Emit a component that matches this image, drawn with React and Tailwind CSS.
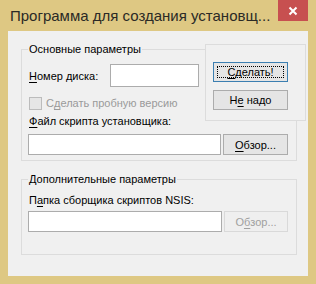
import React from 'react';

const u = 'underline underline-offset-2';

function Btn({ children, def, disabled, w = 'w-[75px]', h = 'h-[20px]', cls = '' }) {
  return (
    <div
      className={`${w} ${h} ${cls} flex items-center justify-center border ${
        disabled
          ? 'border-[#d9d9d9] bg-[#efefef] text-[#a0a0a0]'
          : def
          ? 'border-[#3c7fb1] bg-[#e5e5e5] text-black'
          : 'border-[#acacac] bg-[#e5e5e5] text-black'
      }`}
    >
      {def ? (
        <div className="w-[calc(100%-6px)] h-[calc(100%-6px)] border border-dotted border-black flex items-center justify-center">
          {children}
        </div>
      ) : (
        children
      )}
    </div>
  );
}

export default function App() {
  return (
    <div
      className="w-[316px] h-[284px] bg-[#dec883] flex flex-col text-[11px] leading-[14px] text-black"
      style={{ fontFamily: '"Liberation Sans", Arial, sans-serif' }}
    >
      {/* title bar */}
      <div className="h-[31px] flex items-start shrink-0">
        <div className="pl-[10px] pt-[7px] text-[15px] leading-[18px] text-[#2b2a26] whitespace-nowrap">
          Программа для создания установщ...
        </div>
        <div className="ml-auto mr-[8px] w-[30px] h-[21px] bg-[#c75050] flex items-center justify-center">
          <svg width="10" height="10" viewBox="0 0 10 10">
            <path d="M1.5 1.5 L8.5 8.5 M8.5 1.5 L1.5 8.5" stroke="white" strokeWidth="2" />
          </svg>
        </div>
      </div>

      {/* client area */}
      <div className="mx-[8px] h-[245px] bg-[#f0f0f0] relative">
        {/* group 1 */}
        <div className="relative mt-[18px] ml-[13px] w-[276px] h-[112px] border border-[#dcdcdc] flex flex-col">
          <div className="absolute -top-[8px] left-[6px] px-[1px] bg-[#f0f0f0]">Основные параметры</div>
          <div className="mt-[14px] pl-[7px] flex items-center h-[23px]">
            <div className="w-[81px]">
              <span className={u}>Н</span>омер диска:
            </div>
            <div className="w-[89px] h-[23px] bg-white border border-[#acacac]" />
          </div>
          <div className="mt-[9px] pl-[7px] flex items-center text-[#9a9a9a]">
            <div className="w-[13px] h-[13px] border border-[#bcbcbc] bg-[#e6e6e6]" />
            <div className="ml-[4px]">
              С<span className={u}>д</span>елать пробную версию
            </div>
          </div>
          <div className="mt-[4px] pl-[7px]">
            <span className={u}>Ф</span>айл скрипта установщика:
          </div>
          <div className="mt-[6px] pl-[6px] flex items-start">
            <div className="w-[193px] h-[21px] bg-white border border-[#acacac]" />
            <Btn w="w-[65px]" h="h-[21px]" cls="ml-[2px]">
              <span className={u}>О</span>бзор...
            </Btn>
          </div>
        </div>

        {/* group 2 */}
        <div className="relative mt-[18px] ml-[13px] w-[276px] h-[76px] border border-[#dcdcdc] flex flex-col">
          <div className="absolute -top-[8px] left-[6px] px-[1px] bg-[#f0f0f0]">Дополнительные параметры</div>
          <div className="mt-[13px] pl-[7px]">
            П<span className={u}>а</span>пка сборщика скриптов NSIS:
          </div>
          <div className="mt-[4px] pl-[6px] flex items-start">
            <div className="w-[194px] h-[21px] bg-white border border-[#acacac]" />
            <Btn w="w-[64px]" h="h-[21px]" cls="ml-[2px]" disabled>
              О<span className={u}>б</span>зор...
            </Btn>
          </div>
        </div>

        {/* button panel */}
        <div className="absolute left-[197px] top-[13px] w-[101px] h-[77px] border border-[#dcdcdc] bg-[#f0f0f0] flex flex-col pl-[7px]">
          <Btn def cls="mt-[17px]">
            <span className={u}>С</span>делать!
          </Btn>
          <Btn cls="mt-[8px]">
            <span>
              Н<span className={u}>е</span>{'\u00a0'}надо
            </span>
          </Btn>
        </div>
      </div>
    </div>
  );
}
